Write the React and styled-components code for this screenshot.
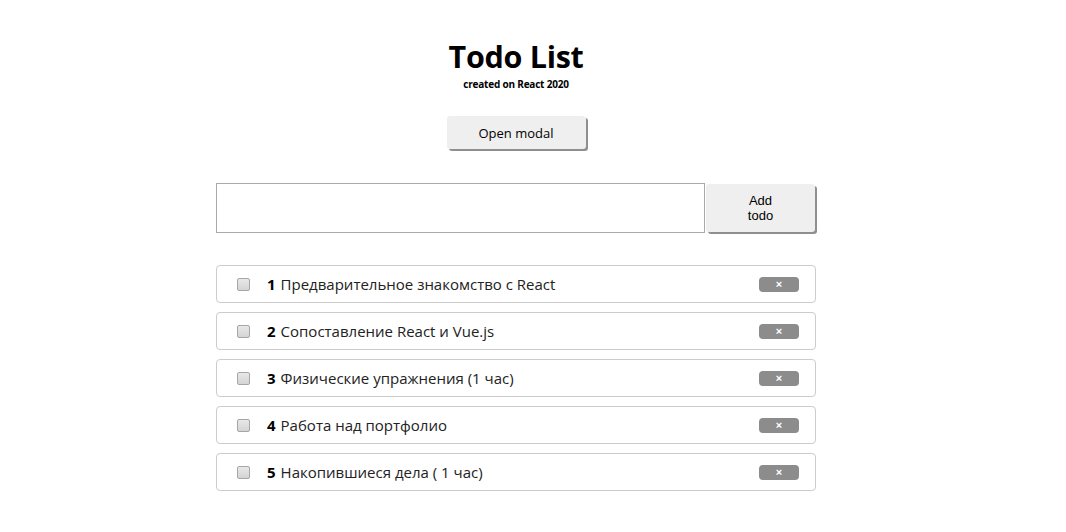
import React from "react"
import styled, { createGlobalStyle } from "styled-components"

const GlobalStyle = createGlobalStyle`
body {
  margin: 0;
  background: #fff;
  font-family: "Open Sans", "Noto Sans", sans-serif;
  color: #000;
}
`

const Page = styled.div`
  width: 1032px;
  display: flex;
  flex-direction: column;
  align-items: center;
  padding-top: 37px;
`

const Title = styled.h1`
  margin: 0;
  font-size: 30.5px;
  font-weight: 700;
  line-height: 38px;
  letter-spacing: -0.3px;
`

const Sub = styled.div`
  font-size: 10px;
  font-weight: 700;
  line-height: 14px;
  margin-top: 2px;
  letter-spacing: -0.2px;
`

const ModalButton = styled.button`
  margin-top: 25px;
  width: 139px;
  height: 33px;
  background: #efefef;
  border: none;
  border-radius: 3px;
  box-shadow: 2px 2px 0 #8f8f8f;
  font-family: "Open Sans", sans-serif;
  font-size: 13px;
  color: #000;
  cursor: pointer;
`

const Form = styled.form`
  display: flex;
  width: 600px;
  margin-top: 34px;
`

const Input = styled.input`
  width: 489px;
  height: 50px;
  box-sizing: border-box;
  border: 1px solid #a9a9a9;
  outline: none;
`

const AddButton = styled.button`
  width: 109px;
  height: 48px;
  margin: 1px 0 0 1px;
  background: #efefef;
  border: none;
  border-radius: 3px;
  box-shadow: 2px 2px 0 #8f8f8f;
  font-family: "Liberation Sans", Arial, sans-serif;
  font-size: 13px;
  line-height: 15px;
  color: #000;
  padding: 0 30px;
`

const List = styled.ul`
  list-style: none;
  margin: 32px 0 0;
  padding: 0;
  width: 600px;
  display: flex;
  flex-direction: column;
  gap: 9px;
`

const Item = styled.li`
  height: 38px;
  box-sizing: border-box;
  border: 1px solid #cccccc;
  border-radius: 4px;
  display: flex;
  align-items: center;
  padding: 0 16px 0 20px;
`

const Check = styled.span`
  width: 11px;
  height: 11px;
  border: 1px solid #a6a6a6;
  border-radius: 2px;
  background: linear-gradient(#e8e8e8, #d4d4d4);
  margin-right: 17px;
  flex-shrink: 0;
`

const Label = styled.span`
  flex: 1;
  font-size: 15px;
  color: #222;
  strong {
    color: #000;
    font-weight: 700;
    margin-right: 5px;
  }
`

const Remove = styled.button`
  width: 40px;
  height: 15px;
  border: none;
  border-radius: 4px;
  background: #8c8c8c;
  color: #fff;
  font-size: 11px;
  line-height: 15px;
  padding: 0;
  font-weight: 700;
`

const todos = [
  "Предварительное знакомство с React",
  "Сопоставление React и Vue.js",
  "Физические упражнения (1 час)",
  "Работа над портфолио",
  "Накопившиеся дела ( 1 час)",
]

export default function App() {
  return (
    <Page>
      <GlobalStyle />
      <Title>Todo List</Title>
      <Sub>created on React 2020</Sub>
      <ModalButton>Open modal</ModalButton>
      <Form onSubmit={(e) => e.preventDefault()}>
        <Input type="text" />
        <AddButton type="submit">Add todo</AddButton>
      </Form>
      <List>
        {todos.map((t, i) => (
          <Item key={i}>
            <Check />
            <Label>
              <strong>{i + 1}</strong>
              {t}
            </Label>
            <Remove>×</Remove>
          </Item>
        ))}
      </List>
    </Page>
  )
}
